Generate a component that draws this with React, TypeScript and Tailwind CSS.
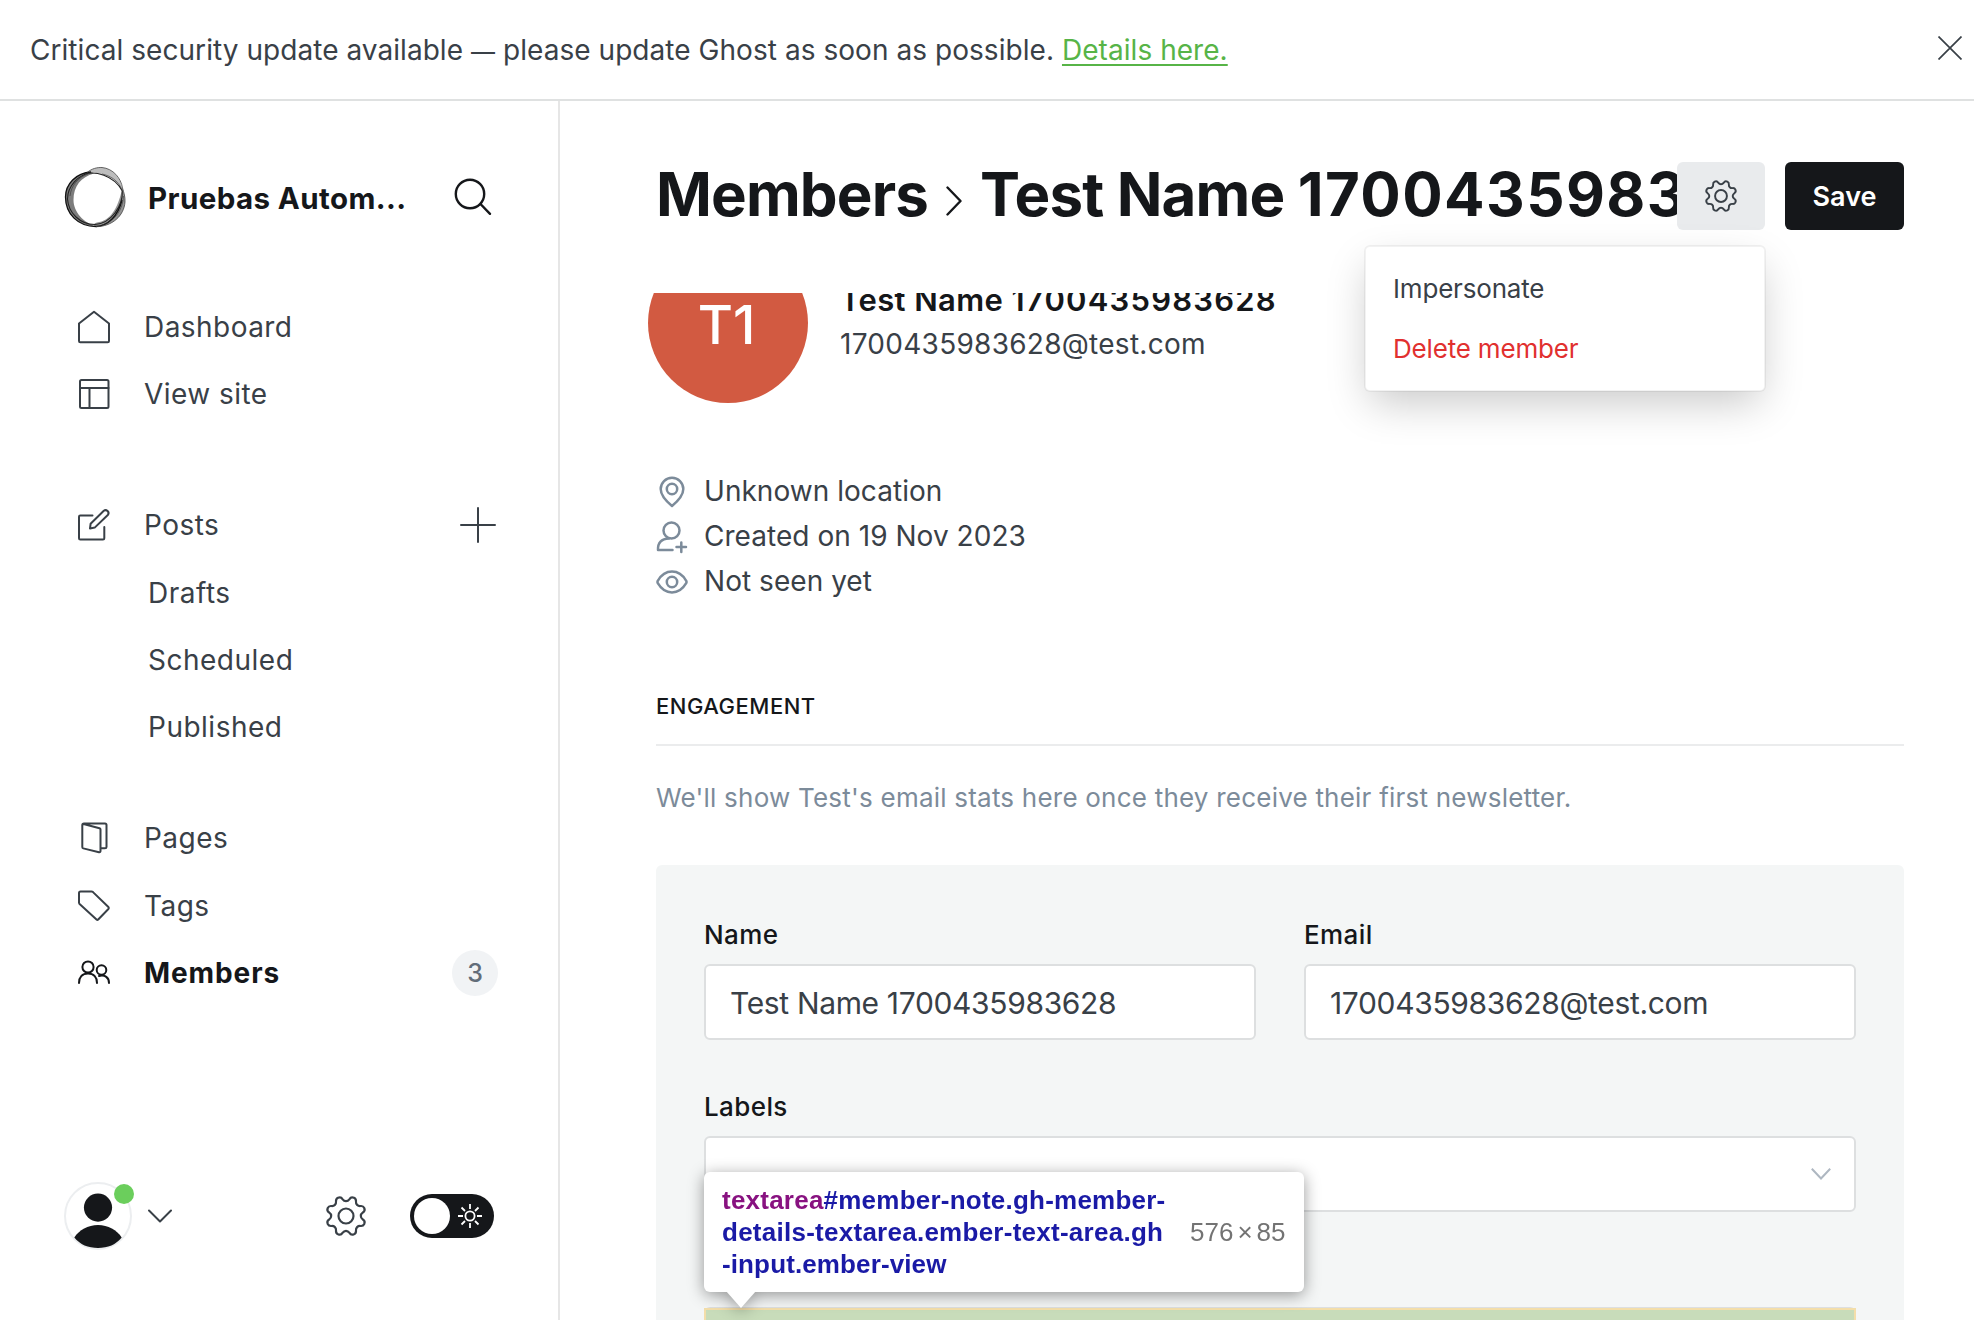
import React, { type ReactNode } from "react";

function GearIcon({ className, sw }: { className: string; sw: number }) {
  return (
    <svg viewBox="0 0 40 40" className={className} fill="none" stroke="currentColor" strokeWidth={sw} strokeLinejoin="round">
      <circle cx="20" cy="20" r="7.9" />
      <path d="M20 4.4C21.6 4.4 22.7 3.6 23.7 2.2C24.7 .5 26.8 .1 28.4 .8C29.9 1.5 30.7 3 30.5 4.7C30.2 7.6 32.4 9.8 35.3 9.5C37 9.3 38.5 10.1 39.2 11.6C39.9 13.2 39.5 15.3 37.8 16.3C36.4 17.3 35.6 18.4 35.6 20C35.6 21.6 36.4 22.7 37.8 23.7C39.5 24.7 39.9 26.8 39.2 28.4C38.5 29.9 37 30.7 35.3 30.5C32.4 30.2 30.2 32.4 30.5 35.3C30.7 37 29.9 38.5 28.4 39.2C26.8 39.9 24.7 39.5 23.7 37.8C22.7 36.4 21.6 35.6 20 35.6C18.4 35.6 17.3 36.4 16.3 37.8C15.3 39.5 13.2 39.9 11.6 39.2C10.1 38.5 9.3 37 9.5 35.3C9.8 32.4 7.6 30.2 4.7 30.5C3 30.7 1.5 29.9 .8 28.4C.1 26.8 .5 24.7 2.2 23.7C3.6 22.7 4.4 21.6 4.4 20C4.4 18.4 3.6 17.3 2.2 16.3C.5 15.3 .1 13.2 .8 11.6C1.5 10.1 3 9.3 4.7 9.5C7.6 9.8 9.8 7.6 9.5 4.7C9.3 3 10.1 1.5 11.6 .8C13.2 .1 15.3 .5 16.3 2.2C17.3 3.6 18.4 4.4 20 4.4Z" />
    </svg>
  );
}

function LogoRing() {
  return (
    <svg viewBox="0 0 64 64" className="h-16 w-16 shrink-0" fill="none">
      <path fill="#111" fillOpacity=".55" d="M27 6C12 7 1.500 18 1.500 31C1.500 48 14 60 32 60.500C20 57 9.500 46 9.500 34C9.500 20 17 11 30 7.500Z" />
      <path fill="#111" fillOpacity=".28" d="M23 6.500C28 2.500 33 1.300 38 1.500C49 2.500 57 12 58.500 24C54 14 44 9 30 6.500Z" />
      <path fill="#111" fillOpacity=".45" d="M58.300 22C60 27 61.300 31 61 36C60 50 48 60.500 32 60.700C30 60 28 58 33 56.500C46 55 54 43 58.300 22Z" />
      <path stroke="#111" strokeWidth="1.300" d="M27 6C12 7 1.500 18 1.500 31C1.500 48 14 60.500 32 60.500C44 60 54 50 58 34" />
      <path stroke="#222" strokeWidth="1.100" d="M20 8.500C30 4.500 50 9 58.300 25C59 40 47 57.500 31 58.500C16 58.500 4.500 47 3.500 33C3.500 20 14 9 27 6.500" />
      <path stroke="#444" strokeWidth=".8" d="M23 6.500C28 2.500 33 1.300 38 1.500C49 2.500 57 12 58.500 22C60 27 61.300 31 61 36C60 50 48 60.500 32 60.700" />
      <path stroke="#333" strokeWidth=".6" d="M38 8C48 10 55 16 58 24M59.500 30C59 44 50 56 38 59M6 30C7 20 14 11 24 8" />
    </svg>
  );
}

function Icon({ children, sw = 2 }: { children: ReactNode; sw?: number }) {
  return (
    <svg viewBox="0 0 32 32" className="h-8 w-8 shrink-0 overflow-visible" fill="none" stroke="currentColor" strokeWidth={sw} strokeLinecap="round" strokeLinejoin="round">
      {children}
    </svg>
  );
}

function NavItem({ icon, label, active, right }: { icon: ReactNode; label: string; active?: boolean; right?: ReactNode }) {
  return (
    <a className={active ? "flex h-[67.3px] items-center font-bold text-[#15171a]" : "flex h-[67.3px] items-center text-[#394047]"}>
      {icon}
      <span className={active ? "ml-[34px] grow text-[28px] tracking-[0.9px]" : "ml-[34px] grow text-[28px] tracking-[0.45px]"}>{label}</span>
      {right}
    </a>
  );
}

function SubItem({ label }: { label: string }) {
  return <a className="flex h-[67.3px] items-center pl-[70px] text-[28px] tracking-[0.5px] text-[#394047]">{label}</a>;
}

function Sidebar() {
  return (
    <aside className="flex w-[560px] shrink-0 flex-col border-r-2 border-[#e6e6e6]">
      <div className="flex items-center pt-[65px] pl-16">
        <LogoRing />
        <span className="ml-5 pt-px text-[29.5px] font-bold leading-[63px] tracking-[0.4px] text-[#15171a]">Pruebas Autom...</span>
        <svg viewBox="0 0 38 38" className="mb-[3px] ml-[48px] h-[38px] w-[38px] text-[#15171a]" fill="none" stroke="currentColor" strokeWidth="2.4" strokeLinecap="round">
          <circle cx="16" cy="16" r="14.2" />
          <path d="M26.5 26L36 35.8" />
        </svg>
      </div>

      <nav className="pt-[63px] pr-[60px] pl-[78px]">
        <NavItem
          label="Dashboard"
          icon={<Icon><path d="M1 12.5L16 .8L31 12.5V30Q31 31.3 29.7 31.3H2.3Q1 31.3 1 30Z" /></Icon>}
        />
        <NavItem
          label="View site"
          icon={<Icon><rect x="2" y="2" width="28.5" height="28" rx="1.5" /><path d="M2 10H30.5M11.5 10V30" /></Icon>}
        />
        <div className="h-16" />
        <NavItem
          label="Posts"
          icon={<Icon><path d="M14.5 6.5H2.3Q1 6.5 1 7.8V29.2Q1 30.5 2.3 30.5H25Q26.3 30.5 26.3 29.2V18" /><path d="M12 19.5L12.6 14.8L25.8 1.8Q27.6 .4 29.6 2Q31.5 4 29.8 6L16.7 18.6Z" /></Icon>}
          right={<svg viewBox="0 0 36 36" className="mr-[2px] h-9 w-9" stroke="currentColor" strokeWidth="2" strokeLinecap="round"><path d="M1 18H35M18 1V35" /></svg>}
        />
        <SubItem label="Drafts" />
        <SubItem label="Scheduled" />
        <SubItem label="Published" />
        <div className="h-11" />
        <NavItem
          label="Pages"
          icon={<Icon><path d="M5.5 2L21.5 6.2Q22.5 6.5 22.5 7.5V29Q22.5 30.5 21 30.2L5.3 26.4Q4.3 26.1 4.3 25V3.3Q4.3 1.5 6 1.5H27Q28.5 1.5 28.5 3V25Q28.5 26.3 27 26.3H23" /></Icon>}
        />
        <NavItem
          label="Tags"
          icon={<Icon><path d="M1 3Q1 1.5 2.5 1.5H13.5Q14.3 1.5 15 2.1L30.4 17Q31.3 18 30.4 19L20.2 29.5Q19.4 30.3 18.5 29.5L1.6 14Q1 13.3 1 12.5Z" /></Icon>}
        />
        <NavItem
          active
          label="Members"
          icon={<Icon><circle cx="10" cy="10" r="5.6" /><circle cx="23.5" cy="13" r="4.8" /><path d="M1 26C1 20 4.5 16.5 10 16.5C15.500 16.500 19 20 19 26M21 19C27 17.500 31 20.500 31 26" /></Icon>}
          right={<span className="flex h-[46px] w-[46px] items-center justify-center rounded-full bg-[#f1f3f5] pt-px text-[25px] font-medium text-[#626d79]">3</span>}
        />
      </nav>

      <div className="mt-auto mb-[68px] flex items-center pl-16">
        <div className="relative h-[72px] w-[68px] shrink-0">
          <svg viewBox="0 0 68 72" className="h-[72px] w-[68px]">
            <circle cx="34" cy="36" r="33" fill="none" stroke="#eceef0" strokeWidth="2" />
            <circle cx="34" cy="27.600" r="14.100" fill="#15171a" />
            <path d="M10.300 57.500C15 50 24 45 34 45C44 45 53 50 57.700 57.500C52 64.500 44 68 34 68C24 68 16 64.500 10.300 57.500Z" fill="#15171a" />
          </svg>
          <span className="absolute top-1 left-[50px] h-5 w-5 rounded-full bg-[#6bce5c]" />
        </div>
        <svg viewBox="0 0 24 14" className="ml-4 h-[14px] w-6 text-[#394047]" fill="none" stroke="currentColor" strokeWidth="2" strokeLinecap="round" strokeLinejoin="round"><path d="M1 1.500L12 12.500L23 1.500" /></svg>
        <GearIcon className="ml-[155px] h-[38px] w-[38px] overflow-visible text-[#394047]" sw={2.300} />
        <div className="ml-[45px] flex h-11 w-[84px] items-center justify-between rounded-full bg-[#15171a] pr-3 pl-1">
          <span className="h-9 w-9 rounded-full bg-white" />
          <svg viewBox="0 0 24 24" className="h-6 w-6" fill="none" stroke="white" strokeWidth="1.800"><circle cx="12" cy="12" r="4.600" /><path d="M12 0V5M12 19V24M0 12H5M19 12H24M3.500 3.500L7 7M17 17L20.500 20.500M20.500 3.500L17 7M7 17L3.500 20.500" /></svg>
        </div>
      </div>
    </aside>
  );
}

function Label({ children }: { children: ReactNode }) {
  return <label className="block text-[26px] font-medium leading-9 tracking-[0.4px] text-[#15171a]">{children}</label>;
}

function Field({ label, value }: { label: string; value: string }) {
  return (
    <div className="flex-1">
      <Label>{label}</Label>
      <div className="mt-[11px] flex h-[76px] items-center rounded-md border-2 border-[#dddfe0] bg-white px-6 pt-[3px] text-[30px] tracking-[-0.34px] text-[#394047]">{value}</div>
    </div>
  );
}

function MenuCard() {
  return (
    <div className="absolute top-[144px] right-[208px] h-[147px] w-[402px] rounded-md border-2 border-black/5 bg-white bg-clip-padding px-[27px] pt-[11px] text-[26px] tracking-[-0.18px] text-[#394047] shadow-[0_16px_40px_-6px_rgba(0,0,0,0.22)]">
      <div className="flex h-[60px] items-center">Impersonate</div>
      <div className="flex h-[60px] items-center text-[#e1302f]">Delete member</div>
    </div>
  );
}

function InspectorTip() {
  return (
    <div className="absolute top-[1071px] left-[144px] flex h-[120px] w-[600px] items-center rounded-md bg-white font-['Liberation_Sans'] drop-shadow-[0_3px_8px_rgba(0,0,0,0.4)]">
      <div className="ml-[18px] w-[450px] text-[26px] font-bold leading-8 tracking-[0.23px] whitespace-nowrap text-[#1a1aa6]">
        <span className="text-[#881280]">textarea</span>#member-note.gh-member-
        <br />
        <span className="tracking-[0.26px]">details-textarea.ember-text-area.gh</span>
        <br />
        <span className="tracking-[0.12px]">-input.ember-view</span>
      </div>
      <span className="ml-[18px] text-[26px] whitespace-nowrap text-[#737373]">576<span className="mx-1">×</span>85</span>
      <span className="absolute top-[119px] left-[22px] border-x-[15px] border-t-[17px] border-x-transparent border-t-white" />
    </div>
  );
}

export default function App() {
  return (
    <div className="flex h-[1320px] w-[1974px] flex-col overflow-hidden bg-white font-['Inter',sans-serif]">
      <div className="flex h-[101px] shrink-0 items-center justify-between border-b-2 border-[#dfe1e1] pr-3 pl-[30px] text-[28px] text-[#394047]">
        <p className="tracking-[0.05px]">Critical security update available <span className="text-[24px]">—</span> please update Ghost as soon as possible. <a className="text-[#57b447] underline underline-offset-4">Details here.</a></p>
        <svg viewBox="0 0 24 24" className="mb-[3px] h-6 w-6" stroke="currentColor" strokeWidth="1.700"><path d="M.5 .5L23.500 23.500M23.500 .5L.5 23.500" /></svg>
      </div>
      <div className="flex min-h-0 grow">
        <Sidebar />
        <main className="relative flex grow flex-col pr-[70px] pl-24">
          <header className="flex h-[192px] shrink-0 items-start pt-[61px]">
            <h1 className="-mt-0.5 flex w-[1021px] items-center overflow-hidden text-[60px] font-bold leading-[68px] tracking-[-0.85px] whitespace-nowrap text-[#15171a]">
              Members
              <svg viewBox="0 0 16 30" className="mt-[14px] mr-[18px] ml-[18px] h-[30px] w-4 shrink-0" fill="none" stroke="currentColor" strokeWidth="2.400" strokeLinecap="round" strokeLinejoin="round"><path d="M1.500 1.500L14.500 15L1.500 28.500" /></svg>
              <span>Test Name <span className="tracking-[1.4px]">1700435983628</span></span>
            </h1>
            <button className="flex h-[68px] w-[88px] shrink-0 items-center justify-center rounded-md bg-[#e9ebed] text-[#394047]"><GearIcon className="h-[30px] w-[30px] overflow-visible" sw={2.600} /></button>
            <button className="ml-5 h-[68px] w-[119px] shrink-0 rounded-md bg-[#15171a] pt-0.5 text-[27px] font-semibold text-white">Save</button>
          </header>
          <div className="-ml-2 min-h-0 grow overflow-hidden pl-2">
            <div className="-mt-[50px] -ml-2 flex h-40 items-center">
              <div className="flex h-40 w-40 shrink-0 items-center justify-center rounded-full bg-[#d25a41] pt-0.5 pr-[3px] text-[54px] font-medium text-white">T1</div>
              <div className="ml-8 pb-0.5">
                <h2 className="text-[31px] font-semibold leading-10 tracking-[0.4px] text-[#15171a]">Test Name <span className="tracking-[1.2px]">1700435983628</span></h2>
                <p className="mt-1 text-[28px] leading-10 tracking-[0.27px] text-[#394047]">1700435983628@test.com</p>
              </div>
            </div>
            <ul className="mt-[66px] text-[28px] leading-[45px] tracking-[0.04px] text-[#394047]">
              <li className="flex items-center gap-4"><span className="text-[#7c8b9a]"><Icon sw={2.500}><path d="M16 30C10 25 4.700 19.500 4.700 13A11.300 11.300 0 0 1 27.300 13C27.300 19.500 22 25 16 30Z" /><circle cx="16" cy="13" r="5.200" /></Icon></span>Unknown location</li>
              <li className="flex items-center gap-4"><span className="text-[#7c8b9a]"><Icon sw={2.500}><circle cx="15.500" cy="9.500" r="8" /><path d="M16.500 29H2Q1.500 18 13 17.500M20.500 26H30M25.300 21.500V31" /></Icon></span>Created on 19 Nov 2023</li>
              <li className="flex items-center gap-4"><span className="text-[#7c8b9a]"><Icon sw={2.500}><path d="M1.800 14.800C9 2.500 23 2.500 30.200 14.800Q31 16 30.200 17.200C23 29.500 9 29.500 1.800 17.200Q1 16 1.800 14.800Z" /><circle cx="16" cy="16" r="5.200" /></Icon></span>Not seen yet</li>
            </ul>
            <h3 className="mt-[84px] border-b-2 border-[#ebeced] pb-[20px] text-[22px] font-medium leading-9 tracking-[0.5px] text-[#15171a]">ENGAGEMENT</h3>
            <p className="mt-8 text-[26px] leading-10 tracking-[0.22px] text-[#7c8b9a]">We'll show Test's email stats here once they receive their first newsletter.</p>
            <section className="mt-[47px] h-[600px] rounded-md bg-[#f4f6f6] px-12 pt-[52px]">
              <div className="mb-[49px] flex gap-12">
                <Field label="Name" value="Test Name 1700435983628" />
                <Field label="Email" value="1700435983628@test.com" />
              </div>
              <Label>Labels</Label>
              <div className="mt-[11px] mb-12 flex h-[76px] items-center justify-end rounded-md border-2 border-[#dddfe0] bg-white pr-[23px]">
                <svg viewBox="0 0 20 12" className="h-3 w-5 text-[#aeb7c1]" fill="none" stroke="currentColor" strokeWidth="2"><path d="M.8 .8L10 10.500L19.200 .8" /></svg>
              </div>
              <Label>Note <span className="font-normal text-[#7c8b9a]">(not visible to member)</span></Label>
              <div className="mt-[11px] rounded-t-md border-t border-[#dddfe0]">
                <div className="h-40 border-2 border-[#f3deaa] bg-[#c8dcba]" />
              </div>
            </section>
          </div>
          <MenuCard />
          <InspectorTip />
        </main>
      </div>
    </div>
  );
}
